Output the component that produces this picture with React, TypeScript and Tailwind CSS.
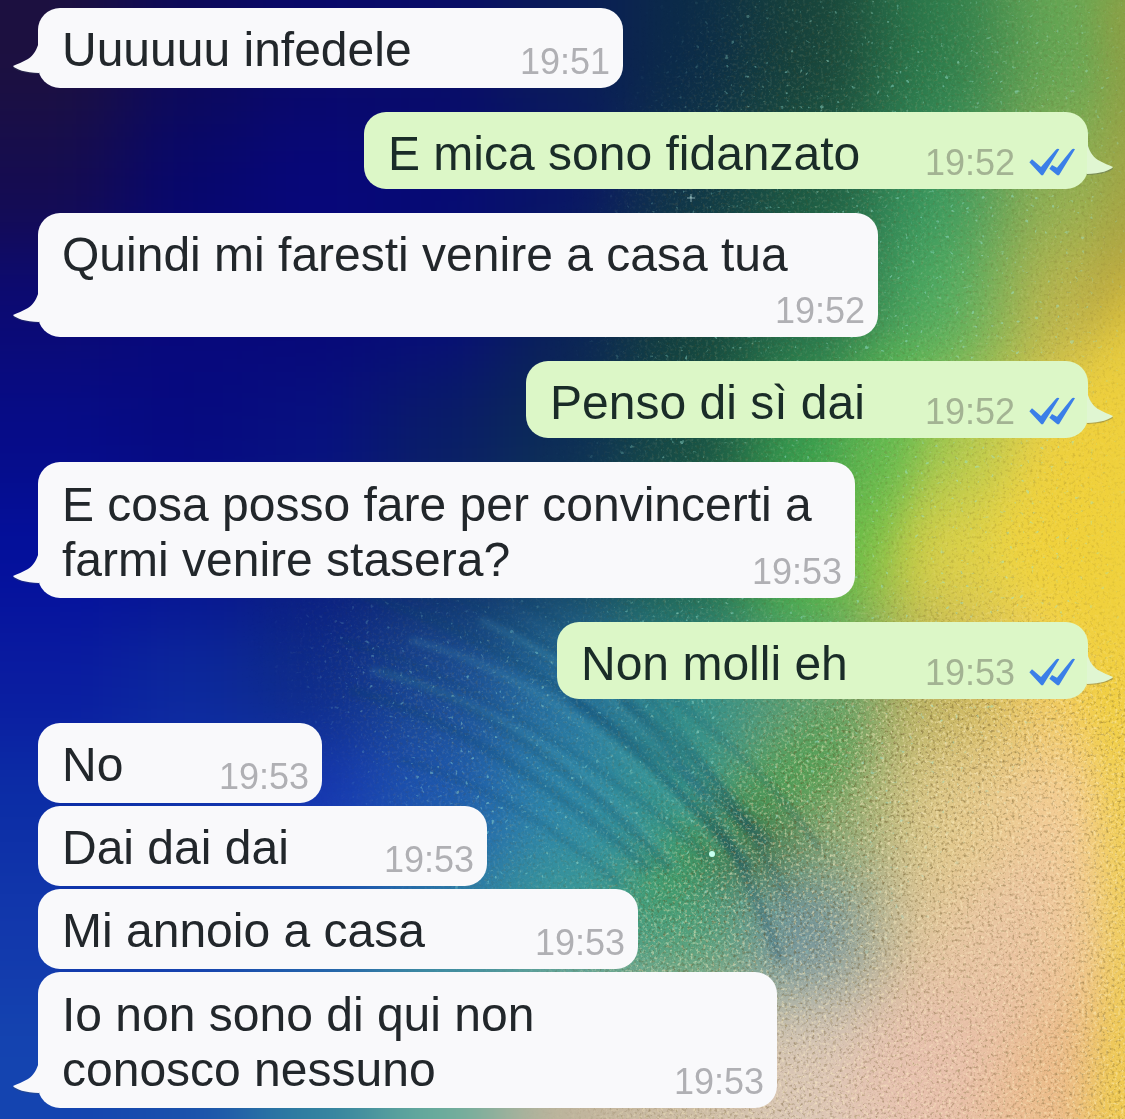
import clsx from 'clsx';

type Message = {
    lines: string[];
    time: string;
    width: string;
    mine?: boolean;
    tail?: boolean;
    timeBelow?: boolean;
};

// consecutive messages from the same sender sit in one group
const groups: Message[][] = [
    [{ lines: ['Uuuuuu infedele'], time: '19:51', width: 'w-[585px]', tail: true }],
    [{ lines: ['E mica sono fidanzato'], time: '19:52', width: 'w-[724px]', mine: true, tail: true }],
    [{ lines: ['Quindi mi faresti venire a casa tua'], time: '19:52', width: 'w-[840px]', tail: true, timeBelow: true }],
    [{ lines: ['Penso di sì dai'], time: '19:52', width: 'w-[562px]', mine: true, tail: true }],
    [{ lines: ['E cosa posso fare per convincerti a', 'farmi venire stasera?'], time: '19:53', width: 'w-[817px]', tail: true }],
    [{ lines: ['Non molli eh'], time: '19:53', width: 'w-[531px]', mine: true, tail: true }],
    [
        { lines: ['No'], time: '19:53', width: 'w-[284px]' },
        { lines: ['Dai dai dai'], time: '19:53', width: 'w-[449px]' },
        { lines: ['Mi annoio a casa'], time: '19:53', width: 'w-[600px]' },
        { lines: ['Io non sono di qui non', 'conosco nessuno'], time: '19:53', width: 'w-[739px]', tail: true },
    ],
];

// 9 x 9 colour field, blurred into a smooth wash
const wash = [
    ['#1c1040', '#0d0a5a', '#09096a', '#090c68', '#0a1c58', '#0b2b48', '#17433a', '#2c7c4c', '#68a854'],
    ['#150c50', '#07076c', '#07077a', '#060a74', '#091468', '#103648', '#1c5a42', '#3a9a60', '#94b052'],
    ['#0b0a74', '#07087c', '#070878', '#070d78', '#0a2058', '#12403c', '#26704c', '#4fae62', '#c0b64c'],
    ['#060c88', '#060a80', '#071080', '#091c68', '#0c2c55', '#164c44', '#38a050', '#a4c850', '#ecd048'],
    ['#04109c', '#061290', '#0a1c80', '#0e2c68', '#123e5c', '#1c6048', '#4cb844', '#dcd048', '#f2d846'],
    ['#0a1ca0', '#0c289c', '#0e2c88', '#1a4a94', '#2670a0', '#308c8c', '#5ca070', '#c0b25c', '#f4cc5c'],
    ['#0c2ea6', '#1034ac', '#1636b4', '#1e58b0', '#2e88aa', '#36968a', '#7ca468', '#e0c888', '#f4cc98'],
    ['#1238ac', '#143cb0', '#1c54b0', '#2e80a4', '#3c9c94', '#4ca078', '#7c9c98', '#e4c898', '#f0c898'],
    ['#1444b0', '#1a50ac', '#3080a0', '#68ac9c', '#c0b49c', '#ccbca4', '#dcc8b8', '#e8c0ac', '#ecbc88'],
];

const streaks = [
    'M350 590C450 620 600 700 750 830',
    'M400 590C500 625 640 710 765 845',
    'M440 590C560 640 670 720 770 845',
    'M340 640C450 670 590 750 710 860',
    'M350 690C450 715 560 790 650 870',
    'M520 600C620 650 700 740 790 900',
    'M380 670C480 700 590 780 670 870',
    'M400 760C480 780 560 830 620 885',
    'M620 700C690 760 740 850 780 960',
    'M660 690C720 730 780 790 820 850',
    'M570 700C640 750 700 810 750 870',
    'M420 610C530 650 640 740 730 850',
];

function Wallpaper() {
    return (
        <svg
            className="absolute inset-0 -z-10 h-full w-full"
            viewBox="0 0 1125 1119"
            preserveAspectRatio="none"
            aria-hidden="true"
        >
            <defs>
                <filter id="wash" x="-20%" y="-20%" width="140%" height="140%" colorInterpolationFilters="sRGB">
                    <feGaussianBlur stdDeviation="40" />
                </filter>
                <filter id="soft" x="-50%" y="-50%" width="200%" height="200%" colorInterpolationFilters="sRGB">
                    <feGaussianBlur stdDeviation="22" />
                </filter>
                <filter id="thin" colorInterpolationFilters="sRGB">
                    <feGaussianBlur stdDeviation="3" />
                </filter>
                <filter id="lightGrain" x="0" y="0" width="100%" height="100%" colorInterpolationFilters="sRGB">
                    <feTurbulence type="fractalNoise" baseFrequency="0.33" numOctaves="3" seed="4" />
                    <feColorMatrix values="0 0 0 0 1  0 0 0 0 .95  0 0 0 0 .78  3 0 0 0 -1.5" />
                </filter>
                <filter id="darkGrain" x="0" y="0" width="100%" height="100%" colorInterpolationFilters="sRGB">
                    <feTurbulence type="fractalNoise" baseFrequency="0.33" numOctaves="3" seed="11" />
                    <feColorMatrix values="0 0 0 0 .38  0 0 0 0 .3  0 0 0 0 .12  0 3 0 0 -1.6" />
                </filter>
                <filter id="stars" x="0" y="0" width="100%" height="100%" colorInterpolationFilters="sRGB">
                    <feTurbulence type="fractalNoise" baseFrequency="0.2" numOctaves="2" seed="8" />
                    <feColorMatrix values="0 0 0 0 .6  0 0 0 0 .9  0 0 0 0 .85  8 0 0 0 -5.6" />
                </filter>
                <mask id="sandMask">
                    <path d="M640 1200L560 1000L680 830L830 680L960 640L1200 680V1200Z" fill="white" filter="url(#wash)" />
                </mask>
                <mask id="starMask">
                    <path d="M300 620L600 620L640 200L740 -20L1125 -20L1125 600L880 960L480 960Z" fill="white" filter="url(#wash)" />
                </mask>
            </defs>

            <g filter="url(#wash)">
                {/* the outer cells run past the edge so the blur never fades out */}
                <rect x="-200" y="-200" width="1525" height="1519" fill="#0a1478" />
                {wash.map((row, r) =>
                    row.map((color, c) => (
                        <rect
                            key={`${r}-${c}`}
                            x={c === 0 ? -200 : c * 125}
                            y={r === 0 ? -200 : r * 124}
                            width={c === 0 || c === 8 ? 326 : 126}
                            height={r === 0 || r === 8 ? 330 : 126}
                            fill={color}
                        />
                    ))
                )}
            </g>

            <g filter="url(#soft)">
                <path d="M1102 -20L1150 -20V330H1090L1112 160Z" fill="#b49a36" opacity=".6" />
                <path d="M1150 250V1150H1092L1108 950L1095 760L1070 640L1000 540L1080 380Z" fill="#f0d03a" opacity=".85" />
                <path d="M640 880L760 760L860 700L850 780L720 850L650 920Z" fill="#3f9c48" opacity=".6" />
                <path d="M740 880L830 890L850 960L770 980Z" fill="#6488a0" opacity=".4" />
                <path d="M720 800L800 820L790 880L700 890Z" fill="#345f38" opacity=".5" />
                <path d="M960 900L1040 840L1050 1010L930 1119L820 1119Z" fill="#e8c0b0" opacity=".4" />
                <path d="M860 350L930 350L920 450L860 600Z" fill="#48bc50" opacity=".5" />
            </g>

            <g fill="none" filter="url(#thin)">
                {streaks.map((d, i) => (
                    <path key={d} d={d} stroke="#0c4268" strokeWidth={i % 2 ? 5 : 9} opacity=".26" />
                ))}
                <path
                    d="M410 640C530 670 640 760 720 850M370 670C500 700 600 780 680 870M480 620C590 670 680 750 750 860"
                    stroke="#58b4c4"
                    strokeWidth="6"
                    opacity=".2"
                />
            </g>

            <g mask="url(#sandMask)">
                <rect width="1125" height="1119" filter="url(#lightGrain)" opacity=".5" />
                <rect width="1125" height="1119" filter="url(#darkGrain)" opacity=".4" />
            </g>
            <g mask="url(#starMask)">
                <rect width="1125" height="1119" filter="url(#stars)" opacity=".45" />
                <rect width="1125" height="1119" filter="url(#lightGrain)" opacity=".12" />
                <rect width="1125" height="1119" filter="url(#darkGrain)" opacity=".2" />
            </g>
            <path d="M691 194V202M687 198H695" stroke="#b8d8d8" strokeOpacity=".7" />
            <circle cx="712" cy="854" r="3" fill="#c8fff0" />
        </svg>
    );
}

function Tail({ mine }: { mine?: boolean }) {
    return (
        <svg
            className={clsx(
                'absolute bottom-[14px] h-8 w-[27px]',
                mine ? 'left-full -ml-px -scale-x-100 text-[#e0f6d2]' : 'right-full -mr-px text-[#f9f9fb]'
            )}
            viewBox="0 0 27 32"
            aria-hidden="true"
        >
            <path d="M27 2C24 10 20 16 14 19C9 22 1 23 1 26C5 29 16 32 27 32Z" fill="#405060" opacity=".35" />
            <path d="M27 0C25 7 22 13 16 17C11 20 5 22 1 24C3 27 14 31 27 31Z" fill="currentColor" />
        </svg>
    );
}

function ReadTicks() {
    return (
        <svg className="mb-[5px] h-7 w-[46px]" viewBox="0 0 138 84" role="img" aria-label="Letto">
            <path d="M1 43L9 34L36 57L80 6Q86 0 91 4L42 82H37Z" fill="#3b7fe8" />
            <path d="M61 62L69 51L84 59L127 6Q133 0 138 4L90 82H85Z" fill="#3b7fe8" />
        </svg>
    );
}

function Bubble({ message }: { message: Message }) {
    const { lines, time, width, mine, tail, timeBelow } = message;
    return (
        <li
            className={clsx(
                'relative grid max-w-full rounded-[22px]',
                width,
                mine ? 'bg-[#dcf7c7] text-[#1a2c28]' : 'bg-[#f9f9fb] text-[#22272b]'
            )}
        >
            <p
                className={clsx(
                    'col-start-1 row-start-1 pl-6 text-5xl leading-[55px]',
                    lines.length > 1 ? 'pt-[15px]' : 'pt-[14px]',
                    mine ? 'pb-2' : timeBelow ? 'pb-[55px]' : 'pb-[11px]'
                )}
            >
                {lines.map((line) => (
                    <span key={line} className="block w-fit">
                        {line}
                    </span>
                ))}
            </p>
            <div className="col-start-1 row-start-1 flex items-end gap-[14px] self-end justify-self-end pr-[13px] pb-2">
                <time className={clsx('text-4xl leading-9', mine ? 'text-[#a3b393]' : 'text-[#b0b0b4]')}>{time}</time>
                {mine && <ReadTicks />}
            </div>
            {tail && <Tail mine={mine} />}
        </li>
    );
}

export default function App() {
    return (
        <main className="relative isolate min-h-screen overflow-hidden bg-[#0a1478] py-2 pr-[37px] pl-[38px] font-['Liberation_Sans',Arial,sans-serif]">
            <Wallpaper />
            <div className="flex flex-col gap-6">
                {groups.map((group, i) => (
                    <ul key={i} className={clsx('flex flex-col gap-[3px]', group[0].mine ? 'items-end' : 'items-start')}>
                        {group.map((message) => (
                            <Bubble key={message.lines[0]} message={message} />
                        ))}
                    </ul>
                ))}
            </div>
        </main>
    );
}
